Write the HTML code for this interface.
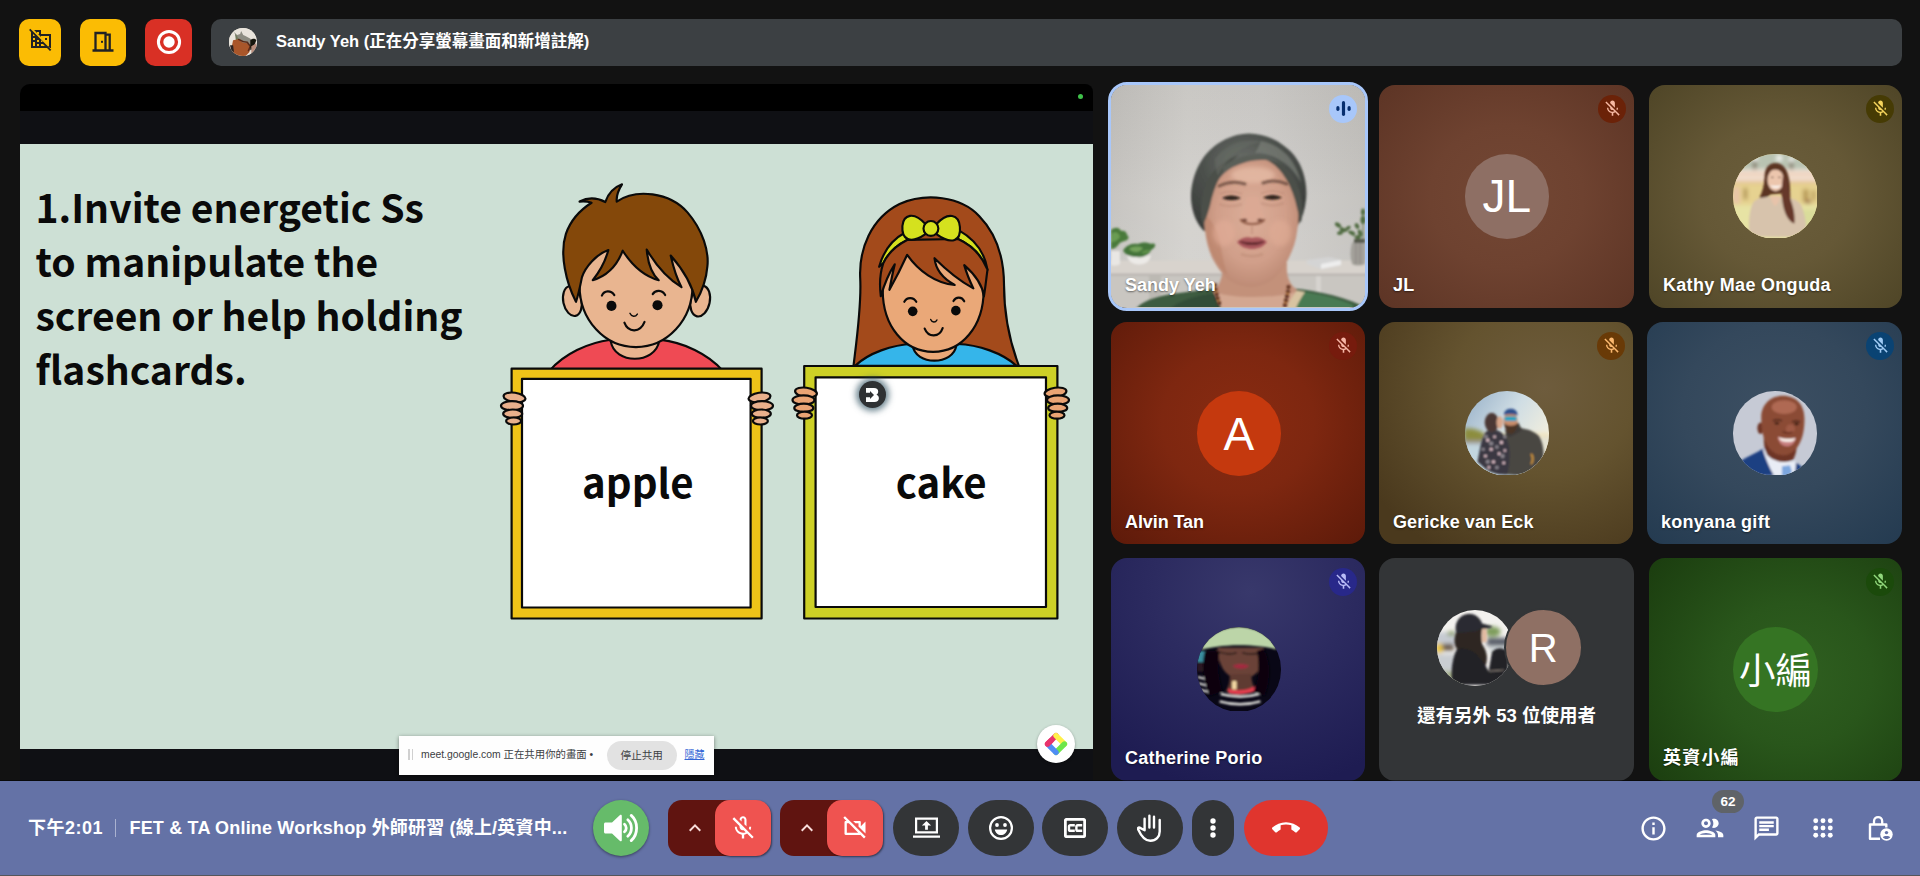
<!DOCTYPE html>
<html lang="zh-Hant">
<head>
<meta charset="utf-8">
<title>Meet</title>
<style>
*{box-sizing:border-box;margin:0;padding:0}
html,body{width:1920px;height:876px;overflow:hidden;background:#121212}
body{position:relative;font-family:"Liberation Sans","Noto Sans CJK TC",sans-serif;color:#fff}
.abs{position:absolute}
/* top bar */
.tb{position:absolute;top:19px;height:47px;border-radius:10px}
.pill{position:absolute;left:211px;top:19px;width:1691px;height:47px;border-radius:10px;background:#3c4043}
.pill .nm{position:absolute;left:65px;top:0;line-height:45px;font-size:16.5px;font-weight:700;letter-spacing:0;color:#fff;white-space:nowrap}
/* presentation */
.pres{position:absolute;left:20px;top:84px;width:1073px;height:697px;background:#0f1014;border-top-left-radius:10px;border-top-right-radius:8px;overflow:hidden}
.pres .blk{position:absolute;left:0;top:0;width:100%;height:27px;background:#000}
.slide{position:absolute;left:0;top:59.6px;width:1073px;height:605.4px;background:#cde0d5}
.stxt{position:absolute;left:15.5px;top:35px;font-family:"Noto Sans CJK TC","Liberation Sans",sans-serif;font-weight:700;font-size:39.05px;line-height:54.2px;color:#0a0a0a;white-space:nowrap}
.cardtxt{position:absolute;font-family:"Noto Sans CJK TC","Liberation Sans",sans-serif;font-weight:700;font-size:40px;color:#0a0a0a;text-align:center;white-space:nowrap}
/* tiles */
.tile{position:absolute;width:254px;height:222px;border-radius:16px;overflow:hidden}
.tile .name{position:absolute;left:14px;top:189.7px;line-height:20px;font-size:18px;font-weight:700;letter-spacing:-.3px;color:#fff;white-space:nowrap;text-shadow:0 1px 2px rgba(0,0,0,.5)}
.tile .av{position:absolute;left:85.5px;top:69px;width:84.5px;height:84.5px;border-radius:50%;overflow:hidden;text-align:center;line-height:84.5px;font-size:46px;color:#fff}
.tile .mic{position:absolute;right:8px;top:9.8px;width:28px;height:28px;border-radius:50%}
.tile .mic svg{position:absolute;left:4.5px;top:4.5px;width:19px;height:19px}
/* bottom bar */
.bar{position:absolute;left:0;top:780.5px;width:1920px;height:95.5px;background:#6472a6;box-shadow:0 -1px 0 rgba(0,0,0,.5)}
.bar .btn{position:absolute;top:19px;height:56px;border-radius:28px;background:#333537}
.bar .t{position:absolute;top:0;line-height:95px;font-size:18px;font-weight:700;color:#fff;white-space:nowrap;letter-spacing:.18px}
</style>
</head>
<body>

<!-- TOP BAR -->
<div class="tb" style="left:19px;width:42px;background:#fbbc04">
  <svg class="abs" style="left:9.500px;top:8px" width="24" height="24" viewBox="0 0 24 24"><path fill="#202124" d="M8 5h2v2h-.9L12 9.900V9h8v10h-1.100l2.100 2H22V7H12V3H5.100L8 5.900V5zm8 6h2v2h-2v-2zM1.300 1.800L.1 3.100 2 5v16h16l3 3 1.300-1.300-21-20.900zM4 7h.1L6 8.900V9H4V7zm0 4h2v2H4v-2zm0 4h2v2H4v-2zm0 4v-2h2v2H4zm4 0v-2h2v2H8zm0-4v-2h2v2H8zm0-4h.1l1.900 1.900V11zm4 8v-2h2v.1l1.900 1.900H12zm0-4v-1.900L13.900 15H12z"/></svg>
</div>
<div class="tb" style="left:80px;width:46px;background:#fbbc04">
  <svg class="abs" style="left:11px;top:11px" width="24" height="24" viewBox="0 0 24 24"><path fill="none" stroke="#202124" stroke-width="2.300" d="M1.500 20.500h21M4.500 20.500V3h10v17.500M14.500 4.700h4.200v15.800"/><rect x="10" y="10.800" width="2" height="2" fill="#202124"/></svg>
</div>
<div class="tb" style="left:145px;width:47px;background:#d93025">
  <svg class="abs" style="left:10.500px;top:9.500px" width="26" height="26" viewBox="0 0 26 26"><circle cx="13" cy="13" r="10.600" fill="none" stroke="#fff" stroke-width="3"/><circle cx="13" cy="13" r="5.700" fill="#fff"/></svg>
</div>
<div class="pill">
  <div class="abs" id="sandyav" style="left:17.800px;top:8.800px;width:28.400px;height:28.400px;border-radius:50%;background:#e9e3da;overflow:hidden"><svg class="abs" style="left:0;top:0" width="28.400" height="28.400" viewBox="0 0 28 28"><defs><filter id="pb"><feGaussianBlur stdDeviation=".7"/></filter></defs><g filter="url(#pb)"><rect width="28" height="28" fill="#e9e4dc"/><path d="M5 4l3 3 3-1 1-3 2 4c3 1 6 3 9 5l3 1v6l-8 2-9-8z" fill="#8d8c82"/><path d="M6 6l2 2 2 5-3 1z" fill="#6f7a5c"/><path d="M4 12l5-1 4 3 5 1 3 4-1 5-4 4H6L2 22z" fill="#a9562b"/><path d="M9 11c3 2 6 3 9 3l3 4-2 5" stroke="#5a2a18" stroke-width="1.600" fill="none"/><path d="M21 12c2-2 5-2 6 0l-4 9-2 1z" fill="#15130f"/><path d="M22 18l5-3v8l-5 4z" fill="#b98d7c"/><path d="M1 17l3 0 1 7-3-2z" fill="#2a2420"/></g></svg></div>
  <div class="nm">Sandy Yeh (正在分享螢幕畫面和新增註解)</div>
</div>

<!-- PRESENTATION -->
<div class="pres">
  <div class="blk"></div>
  <div class="abs" style="left:1058px;top:10px;width:5px;height:5px;border-radius:50%;background:#3fc14a"></div>
  <div class="slide" id="slide">
    <svg class="abs" style="left:0;top:0" width="1072" height="605.4" viewBox="20 143.6 1072 605.4">
<g stroke="#0a0a0a" stroke-linejoin="round" stroke-linecap="round">
<!-- BOY -->
<g transform="translate(540,170) scale(0.2398)" stroke-width="9">
  <path d="M40 835C100 765 200 718 295 706L500 706C600 718 700 765 762 835Z" fill="#ef4a54"/>
  <path d="M295 712C310 810 480 810 497 712Z" fill="#e9b590"/>
  <ellipse cx="135" cy="545" rx="38" ry="63" transform="rotate(-12 135 545)" fill="#e9b590"/>
  <ellipse cx="668" cy="545" rx="40" ry="65" transform="rotate(12 668 545)" fill="#e9b590"/>
  <path d="M165 480C165 625 270 737 400 737C530 737 636 625 636 480C636 380 560 290 400 290C240 290 165 380 165 480Z" fill="#e9b590"/>
  <path d="M150 548C110 470 80 350 108 265C125 215 160 170 215 135C195 128 180 128 165 130C200 112 240 115 272 132C285 95 310 70 342 58C325 85 318 110 320 130C400 75 540 90 615 175C680 250 705 340 698 400C694 450 672 510 650 548C640 500 620 440 545 355C555 400 570 450 590 487C530 450 480 390 445 330C450 390 465 430 495 458C430 440 380 390 345 335C320 400 280 440 220 458C250 420 275 370 285 332C235 350 190 400 175 445C168 480 160 520 150 548Z" fill="#84480a"/>
  <circle cx="298" cy="565" r="21" fill="#0a0a0a" stroke="none"/>
  <circle cx="490" cy="562" r="21" fill="#0a0a0a" stroke="none"/>
  <path d="M258 522C268 500 295 498 310 520" fill="none"/>
  <path d="M470 516C482 497 510 498 522 520" fill="none"/>
  <path d="M375 596C382 612 398 612 406 599" fill="none" stroke-width="6"/>
  <path d="M352 635C368 678 418 678 436 632" fill="none"/>
</g>
<!-- GIRL -->
<g transform="translate(830,170) scale(0.23973)" stroke-width="9">
  <path d="M98 815C112 700 132 560 126 450C120 330 170 200 290 140C400 92 545 108 622 190C700 270 726 380 726 480C726 600 752 720 788 815Z" fill="#a34a1b"/>
  <path d="M105 815C160 762 260 727 345 724L530 724C620 727 720 762 778 815Z" fill="#35b5ea"/>
  <path d="M345 730C355 815 515 815 527 730Z" fill="#eaa878"/>
  <path d="M220 500C220 650 310 757 430 757C550 757 641 650 641 500C641 400 560 320 430 320C300 320 220 400 220 500Z" fill="#eaa878"/>
  <path d="M205 402C225 330 265 285 312 260L322 290C282 310 242 345 222 388Z" fill="#d5e11e"/>
  <path d="M538 250C600 285 645 340 657 414C635 360 592 312 534 286Z" fill="#d5e11e"/>
  <path d="M212 525C205 470 208 430 222 388C242 345 282 310 322 290L534 286C592 312 635 360 657 414C652 450 648 490 642 525C635 470 600 430 560 395C570 430 585 465 598 492C540 460 480 410 436 366C440 410 470 450 520 478C440 470 370 420 322 352C300 400 275 450 248 498C255 460 262 425 270 392C245 430 225 480 212 525Z" fill="#a34a1b"/>
  <path d="M398 224C350 170 306 184 302 232C298 288 335 310 398 266Z" fill="#d5e11e"/>
  <path d="M444 224C492 170 538 184 542 236C547 292 510 314 444 266Z" fill="#d5e11e"/>
  <circle cx="421" cy="242" r="31" fill="#d5e11e"/>
  <circle cx="345" cy="588" r="20" fill="#0a0a0a" stroke="none"/>
  <circle cx="525" cy="585" r="20" fill="#0a0a0a" stroke="none"/>
  <path d="M310 548C320 528 348 527 360 548" fill="none"/>
  <path d="M515 545C525 526 550 526 560 546" fill="none"/>
  <path d="M420 622C426 636 440 636 446 624" fill="none" stroke-width="6"/>
  <path d="M395 660C410 698 456 698 470 658" fill="none"/>
</g>
<!-- CARDS -->
<g stroke-width="2.2">
  <rect x="511.600" y="368.300" width="250" height="249.800" fill="#efc318"/>
  <rect x="522" y="378.500" width="228.600" height="228.600" fill="#fff"/>
  <rect x="804.200" y="365.600" width="253.200" height="252.500" fill="#cdd026"/>
  <rect x="815.600" y="376.900" width="230.400" height="229.700" fill="#fff"/>
</g>
<!-- HANDS -->
<g stroke-width="2.2" fill="#e9b08c">
  <ellipse cx="514.500" cy="397" rx="11" ry="4.700" transform="rotate(8 514.500 397)"/>
  <ellipse cx="512" cy="405.300" rx="11" ry="4.600"/>
  <ellipse cx="512.700" cy="413.300" rx="9.500" ry="4.200"/>
  <ellipse cx="513.600" cy="420.600" rx="7.500" ry="3.500"/>
  <ellipse cx="759.500" cy="397" rx="11" ry="4.700" transform="rotate(-8 759.500 397)"/>
  <ellipse cx="762" cy="405.300" rx="11" ry="4.600"/>
  <ellipse cx="761.300" cy="413.300" rx="9.500" ry="4.200"/>
  <ellipse cx="760.400" cy="420.600" rx="7.500" ry="3.500"/>
</g>
<g stroke-width="2.2" fill="#eaa474">
  <ellipse cx="806" cy="392" rx="11" ry="4.700" transform="rotate(8 806 392)"/>
  <ellipse cx="803.500" cy="399.500" rx="11" ry="4.600"/>
  <ellipse cx="803.800" cy="407.500" rx="9.500" ry="4.200"/>
  <ellipse cx="804.500" cy="414.800" rx="7.500" ry="3.500"/>
  <ellipse cx="1055.500" cy="392" rx="11" ry="4.700" transform="rotate(-8 1055.500 392)"/>
  <ellipse cx="1058" cy="399.500" rx="11" ry="4.600"/>
  <ellipse cx="1057.700" cy="407.500" rx="9.500" ry="4.200"/>
  <ellipse cx="1057" cy="414.800" rx="7.500" ry="3.500"/>
</g>
</g>
<text x="637.800" y="497.200" text-anchor="middle" font-family="'Noto Sans CJK TC','Liberation Sans',sans-serif" font-weight="700" font-size="40.200" fill="#0a0a0a">apple</text>
<text x="941.200" y="497.200" text-anchor="middle" font-family="'Noto Sans CJK TC','Liberation Sans',sans-serif" font-weight="700" font-size="40.200" fill="#0a0a0a">cake</text>
</svg>
<div class="stxt">1.Invite energetic Ss<br>to manipulate the<br>screen or help holding<br>flashcards.</div>
  </div>

  <!-- B icon -->
  <div class="abs" style="left:838.500px;top:297px;width:27px;height:27px;border-radius:50%;background:#2f3133;box-shadow:0 0 6px 3px rgba(45,80,95,.7)">
    <svg class="abs" style="left:7.500px;top:6.500px" width="13" height="14" viewBox="0 0 13 14"><path fill="#fff" d="M0 0h8c2.800 0 4.200 1.500 4.200 3.500 0 1.500-.7 2.600-1.800 3.200 1.500.5 2.500 1.700 2.500 3.500 0 2.300-1.700 3.800-4.500 3.800H0V9.200h4V11l4-4-4-4v1.800H0z"/></svg>
  </div>
  <!-- annotate -->
  <div class="abs" style="left:1017px;top:641px;width:38px;height:38px;border-radius:50%;background:#fff;box-shadow:0 1px 3px rgba(0,0,0,.35)">
    <svg class="abs" style="left:7px;top:7px" width="24" height="24" viewBox="0 0 24 24"><g fill="none" stroke-width="5.400" stroke-linecap="round"><path d="M3.600 12L12 3.600" stroke="#e8336d"/><path d="M12 3.600L20.400 12" stroke="#fff04a"/><path d="M20.400 12L12 20.400" stroke="#6ee64a"/><path d="M12 20.400L5.600 14" stroke="#4f8df5"/><path d="M3.600 12L7 8.600" stroke="#e8336d"/></g></svg>
  </div>
  <!-- share notice -->
  <div class="abs" style="left:379px;top:652px;width:315px;height:38.500px;background:#fefefe;box-shadow:0 1px 4px rgba(0,0,0,.45);font-size:10.400px;color:#3c4043;white-space:nowrap">
    <div class="abs" style="left:9px;top:13px;width:1.500px;height:11px;background:#d0d0d0"></div><div class="abs" style="left:12.500px;top:13px;width:1.500px;height:11px;background:#d0d0d0"></div>
    <div class="abs" style="left:22px;top:0;line-height:38px">meet.google.com 正在共用你的畫面 •</div>
    <div class="abs" style="left:208px;top:4.500px;width:69.500px;height:29.500px;border-radius:15px;background:#e2e2e2;text-align:center;line-height:29px;font-size:10.600px;color:#3c4043">停止共用</div>
    <div class="abs" style="left:285.500px;top:0;line-height:38px;font-size:10px;color:#3367d6;text-decoration:underline">隱藏</div>
  </div>
</div>

<!-- TILES -->
<div id="tiles">
<div class="abs" style="left:1108px;top:82px;width:260px;height:229px;border-radius:19px;border:3px solid #a8c7fa"></div>
<div class="tile" style="left:1111px;top:85px;height:223px;background:#c9c7c4"><div id="sandyvid" class="abs" style="left:0;top:0;width:254px;height:222px"><svg viewBox="0 0 254 222" width="254" height="222" style="position:absolute;left:0;top:0">
<defs>
<linearGradient id="sw" x1="0" x2="1" y1="0" y2="0"><stop offset="0" stop-color="#c4c2be"/><stop offset=".3" stop-color="#d2d0cc"/><stop offset=".6" stop-color="#d0cecb"/><stop offset="1" stop-color="#c3c1bd"/></linearGradient>
<linearGradient id="swv" x1="0" x2="0" y1="0" y2="1"><stop offset="0" stop-color="#000" stop-opacity=".04"/><stop offset=".5" stop-color="#fff" stop-opacity=".05"/><stop offset="1" stop-color="#fff" stop-opacity=".1"/></linearGradient>
<radialGradient id="sf" cx=".5" cy=".45" r=".6"><stop offset="0" stop-color="#dcae99"/><stop offset=".6" stop-color="#d19f8a"/><stop offset="1" stop-color="#b98670"/></radialGradient>
<radialGradient id="sh" cx=".45" cy=".3" r=".7"><stop offset="0" stop-color="#6b6f6a"/><stop offset=".5" stop-color="#4c504c"/><stop offset="1" stop-color="#3a3d3a"/></radialGradient>
<filter id="sb1" x="-10%" y="-10%" width="120%" height="120%"><feGaussianBlur stdDeviation="1.1"/></filter>
<filter id="sb2" x="-20%" y="-20%" width="140%" height="140%"><feGaussianBlur stdDeviation="2.2"/></filter>
<filter id="sb3" x="-20%" y="-20%" width="140%" height="140%"><feGaussianBlur stdDeviation="0.9"/></filter>
</defs>
<rect width="254" height="222" fill="url(#sw)"/>
<rect width="254" height="222" fill="url(#swv)"/>
<g filter="url(#sb3)">
<!-- shelf -->
<rect x="-2" y="189" width="260" height="36" fill="#c9c6c1"/>
<rect x="-2" y="175.500" width="260" height="14" fill="#d8d3cd"/>
<rect x="-2" y="188.500" width="260" height="2.500" fill="#bcb8b3"/>
<rect x="205" y="191" width="5" height="31" fill="#d6d3cf"/>
<rect x="38" y="191" width="12" height="31" fill="#bcb9b3"/>
<!-- book -->
<path d="M196 175l22-3 12 3v5l-20 4-14-5z" fill="#d4d4d4"/><path d="M210 179l20-4v5l-20 4z" fill="#ededed"/>
<!-- left plants -->
<path d="M0 166h9v13c-3 2-6 2-9 1z" fill="#e9e7e4"/>
<path d="M16 170c8 2 16 2 24 0-1 6-5 9.500-12 9.500S17 176 16 170z" fill="#eceae7"/>
<path d="M0 145c4-3 8-3 10 1 3-1 6 1 6 4 2 1 2 4 0 5-3 2-6 1-8 4-2 3-5 5-8 5z" fill="#4a7a3a"/>
<path d="M1 148c4-2 7 0 8 4-2 3-5 5-9 5z" fill="#6b9c53"/>
<path d="M13 164c3-4 8-6 14-5 4-2 9-2 13 0 3-1 5 0 4 2-1 3-4 3-5 6-3 4-8 6-13 5-6 0-11-2-13-5-1-1-1-2 0-3z" fill="#44753a"/>
<path d="M18 164c4-3 9-3 14-1-2 4-9 6-14 1z" fill="#74a35b"/>
<path d="M30 168c2-3 6-4 9-3-1 3-5 5-9 3z" fill="#5d9049"/>
<!-- right plant -->
<path d="M241 158c2-3 11-3 13 0v21c-4 2-10 2-13 0-2-7-2-14 0-21z" fill="#a3a09a"/>
<path d="M245 157v22M249 157v22" stroke="#8b8882" stroke-width="1.200"/>
<path d="M243 154h11v4h-11z" fill="#55584c"/>
<g fill="#4f6b40"><ellipse cx="227" cy="140" rx="3.500" ry="2" transform="rotate(35 227 140)"/><ellipse cx="232" cy="145" rx="3.500" ry="2" transform="rotate(20 232 145)"/><ellipse cx="237" cy="143" rx="3" ry="1.800" transform="rotate(-30 237 143)"/><ellipse cx="241" cy="148" rx="3.500" ry="2" transform="rotate(25 241 148)"/><ellipse cx="229" cy="148" rx="3" ry="1.800" transform="rotate(-10 229 148)"/><ellipse cx="246" cy="141" rx="3" ry="2" transform="rotate(60 246 141)"/><ellipse cx="249" cy="148" rx="3.500" ry="2" transform="rotate(70 249 148)"/><ellipse cx="252" cy="135" rx="2.500" ry="4" /><ellipse cx="252" cy="127" rx="2" ry="3.500"/><ellipse cx="247" cy="152" rx="3" ry="2"/></g>
<path d="M228 141c6 3 12 7 18 13M252 128v26" stroke="#4f6b40" stroke-width="1" fill="none"/>
</g>
<!-- person -->
<g filter="url(#sb1)">
<path d="M24 226c4-9 20-15 44-18l38-5h68c22 1 52 6 78 18v6z" fill="#3d5b41"/><path d="M186 206c18 2 38 6 56 14v6h-62z" fill="#4a7a52"/><path d="M176 204l18 3c-4 6-8 12-10 19h-14z" fill="#d8c4a2"/>
<path d="M56 226c10-10 30-16 48-18h14l-4 18z" fill="#334e39"/>
<path d="M112 178c0 14-3 22-10 28 5 7 8 13 10 20h62c2-7 6-14 12-21-8-6-11-14-10-27z" fill="#c3917a"/>
<path d="M102 206c4 7 7 13 9 20h64c2-7 5-13 10-19-10 3-24 5-42 5s-33-2-41-6z" fill="#d3a791"/>
<!-- hair back -->
<path d="M93 146c-6-6-10-14-12-24-2-10-1-20 2-30 3-10 8-19 15-26 8-8 17-13 28-16 8-2 16-2 24 0 10 2 19 7 27 14 7 6 12 14 15 23 3 9 4 19 3 28-1 10-4 19-9 27-10 6-83 8-93 4z" fill="url(#sh)"/>
<!-- face -->
<path d="M94 127c1-10 4-20 10-28 5-7 11-13 17.500-18 8-5 17-8 26-8.500 8 0 14 2 20 6.500 6 5 10 11 13 17.500 3 8 5 17 6.500 26 1 8 .5 16-1 24-1 9-4 18-8 26-3 7-8 14-14 20-7 6-15 9-24 9.500-9-.5-17-3-24-8.500-6-6-11-13-15-21-4-9-6-18-7-27-1-6-1-12 0-18.500z" fill="url(#sf)"/>
<path d="M94 130c0 14 2 28 8 40 4 8 9 15 15 21-4-10-6-22-8-34-2-10-6-20-15-27z" fill="#b98268" opacity=".55"/>
<!-- hair front -->
<path d="M92 140c-3-11-3-24 1-36 3-9 8-17 15-23 6-5 13-9 20-11-8 6-14 13-19 22-5 9-8 19-10 29-2 7-4 13-7 19z" fill="#4b4f4a"/>
<path d="M190 138c2-10 2-21-1-31-3-10-8-19-16-25-6-5-14-8-22-9 8 3 15 8 20 15 6 8 10 17 13 27 2 8 4 16 6 23z" fill="#4b4f4a"/>
<path d="M112 82c8-7 18-11 29-12 10-1 20 2 28 8-9-3-19-4-29-2-10 2-20 6-28 13z" fill="#5a5e58"/>
<path d="M150 56c10 2 19 7 26 14 7 8 12 18 14 28-4-8-10-16-18-21-8-6-18-9-28-9 3-4 4-8 6-12z" fill="#7b7f78" opacity=".7"/>
<path d="M104 74c6-8 14-14 24-17 8-2 16-2 24 0-10 1-19 5-27 11-8 6-14 14-18 23-2-6-3-11-3-17z" fill="#666a64" opacity=".6"/>
</g>
<g filter="url(#sb2)">
<ellipse cx="113" cy="148" rx="11" ry="13" fill="#e2ad98" opacity=".6"/>
<ellipse cx="169" cy="148" rx="11" ry="13" fill="#e2ad98" opacity=".55"/>
<ellipse cx="142" cy="90" rx="22" ry="8" fill="#e7bda8" opacity=".7"/>
</g>
<g filter="url(#sb3)">
<!-- brows -->
<path d="M108 101c8-4 17-5 26-2" stroke="#5d4035" stroke-width="3" fill="none" stroke-linecap="round" opacity=".7"/>
<path d="M152 98c8-3 17-2 24 1" stroke="#5d4035" stroke-width="3" fill="none" stroke-linecap="round" opacity=".7"/>
<!-- eyes -->
<path d="M111 113c5-3.500 13-3.500 19 0-6 3-13 3-19 0z" fill="#2f211b"/>
<path d="M152 112.500c6-3.500 13-3.500 19 0-6 3-13 3-19 0z" fill="#2f211b"/>
<path d="M109 109c6-3 15-3 22 0M150 108.500c7-3 16-3 23 0" stroke="#a87661" stroke-width="1.500" fill="none" opacity=".35"/>
<path d="M108 119c6 3 16 3 23 0M150 118c7 3 16 3 23 0" stroke="#b07f6b" stroke-width="2.500" fill="none" opacity=".3"/>
<!-- nose -->
<path d="M136 112c-1 8-3 14-6 19 2 4 6 6 11 6s10-2 12-6c-3-5-5-11-6-19" fill="#dba993" opacity=".9"/>
<path d="M130 135c3 3 7 4 11 4s9-1 12-4" stroke="#9c6853" stroke-width="2.500" fill="none" stroke-linecap="round"/>
<ellipse cx="133.500" cy="135" rx="2.800" ry="1.600" fill="#74463a"/><ellipse cx="149" cy="135" rx="2.800" ry="1.600" fill="#74463a"/>
<path d="M141 141v8" stroke="#c08f7a" stroke-width="2" opacity=".6"/>
<!-- mouth -->
<path d="M126 157c4-4 10-6 15-4 5-2 11 0 15 4-4 5-9 7-15 7s-11-2-15-7z" fill="#a9575c"/>
<path d="M129 156.500c8 2 16 2 24 0-6 4-18 4-24 0z" fill="#4a1c22" stroke="#5e262c" stroke-width="1.200"/>
<path d="M130 169c7 3 15 3 22 0" stroke="#b98772" stroke-width="2.500" fill="none" opacity=".5"/>
<!-- necklace -->
<g fill="#5e3220">
<circle cx="104" cy="200" r="2.100"/><circle cx="104.500" cy="204.500" r="2.100"/><circle cx="105.500" cy="209" r="2.200"/><circle cx="106.500" cy="213.500" r="2.200"/><circle cx="108" cy="218" r="2.200"/>
<circle cx="177.500" cy="202" r="2.100"/><circle cx="177" cy="206.500" r="2.100"/><circle cx="176" cy="211" r="2.200"/><circle cx="175" cy="215.500" r="2.200"/><circle cx="174" cy="220" r="2.200"/>
</g>
<g fill="#b5763c"><circle cx="105" cy="206.800" r="1.200"/><circle cx="107.200" cy="215.800" r="1.200"/><circle cx="176.500" cy="208.800" r="1.200"/><circle cx="174.500" cy="217.800" r="1.200"/></g>
</g>
</svg>
</div><div class="name" style="letter-spacing:0.0px">Sandy Yeh</div><div class="mic" style="background:#a8c7fa"><svg viewBox="0 0 18 18"><g fill="#062e6f"><rect x="7.500" y="2" width="3" height="14" rx="1.500"/><rect x="2.200" y="6.700" width="3" height="4.600" rx="1.500"/><rect x="12.800" y="6.700" width="3" height="4.600" rx="1.500"/></g></svg></div></div>
<div class="tile" style="left:1379px;top:85px;width:255px;height:223px;background:radial-gradient(ellipse 75% 80% at 50% 50%,#734734 0%,#6e4230 40%,#5a3223 100%)"><div class="av" style="background:#8e6f64">JL</div><div class="mic" style="background:#6b2208"><svg viewBox="0 0 24 24"><path fill="#f6b8a2" d="M19 11h-1.7c0 .74-.16 1.43-.43 2.05l1.23 1.23c.56-.98.9-2.09.9-3.28zm-4.02.17c0-.06.02-.11.02-.17V5c0-1.66-1.34-3-3-3S9 3.340 9 5v.18l5.980 5.990zM4.270 3L3 4.270l6.010 6.010V11c0 1.660 1.330 3 2.990 3 .22 0 .44-.03.65-.08l1.660 1.660c-.71.33-1.500.52-2.310.52-2.760 0-5.300-2.100-5.300-5.100H5c0 3.410 2.720 6.230 6 6.720V21h2v-3.280c.91-.13 1.770-.45 2.540-.9L19.730 21 21 19.730 4.270 3z"/></svg></div><div class="name" style="letter-spacing:0.3px">JL</div></div>
<div class="tile" style="left:1649px;top:85px;width:253px;height:223px;background:radial-gradient(ellipse 75% 80% at 50% 50%,#6b5e3c 0%,#655836 40%,#4b4224 100%)"><div class="av" id="av_kathy" style="left:84.3px;background:transparent"><svg class="abs" style="left:0;top:0" width="84" height="84" viewBox="70 68 745 745"><defs><filter id="ab" x="-10%" y="-10%" width="120%" height="120%"><feGaussianBlur stdDeviation="9"/></filter><filter id="ab2" x="-10%" y="-10%" width="120%" height="120%"><feGaussianBlur stdDeviation="18"/></filter></defs>
<rect x="60" y="60" width="770" height="770" fill="#e6d79a"/>
<g filter="url(#ab2)">
<rect x="60" y="40" width="770" height="170" fill="#b9c3b2"/>
<rect x="250" y="110" width="26" height="100" fill="#6e5a45"/><rect x="575" y="120" width="26" height="90" fill="#6e5a45"/>
<circle cx="265" cy="110" r="22" fill="#fff"/><circle cx="480" cy="105" r="24" fill="#fff"/><circle cx="588" cy="118" r="20" fill="#fff"/>
<rect x="60" y="205" width="770" height="120" fill="#f4e9e0"/>
<rect x="60" y="232" width="770" height="18" fill="#e9bf9c"/><rect x="60" y="268" width="770" height="14" fill="#edc9aa"/><rect x="60" y="305" width="770" height="22" fill="#e3b98e"/>
<rect x="60" y="330" width="770" height="190" fill="#e6d290"/>
<rect x="165" y="370" width="30" height="100" fill="#a8894a"/><rect x="690" y="380" width="50" height="110" fill="#b79a57"/><rect x="770" y="390" width="30" height="90" fill="#b79a57"/><rect x="710" y="480" width="50" height="22" fill="#7a3a2a"/>
<rect x="70" y="360" width="60" height="150" fill="#e9c5a8"/>
<rect x="60" y="520" width="770" height="320" fill="#e7e3a4"/>
<rect x="600" y="560" width="240" height="200" fill="#d9dc9a"/>
</g>
<g filter="url(#ab)">
<path d="M445 148c-60 0-95 50-95 120 0 60-10 120-45 190l40 10 60-40 95-10c5 60 15 110 20 170 30 60 60 90 85 100 15-50-5-120-20-180-15-70 0-140-20-230-15-80-55-130-120-130z" fill="#5b3424"/>
<path d="M215 800c-10-120 0-250 40-310 40-35 90-40 130-40l130 5c60 0 110 10 150 50 40 70 60 190 55 300z" fill="#d7c3ac"/>
<path d="M400 440c10 50 30 80 45 90 20-15 40-50 45-90z" fill="#e7c3aa"/>
<ellipse cx="448" cy="300" rx="72" ry="98" fill="#ecc6ad"/>
<path d="M395 345c30 30 80 30 105 0-20 8-85 8-105 0z" fill="#fff"/>
<path d="M372 250c20-50 60-75 100-70 30 5 55 30 60 80-30-40-60-55-90-55-30 0-55 20-70 45z" fill="#5b3424"/>
<path d="M515 235c30 40 45 100 50 160 5 60 30 110 42 165 10 50 12 95 8 125-30-10-60-40-80-90-20-50-30-110-32-170-2-60 5-110 12-190z" fill="#66382a"/><ellipse cx="418" cy="275" rx="11" ry="6" fill="#3a2018"/><ellipse cx="482" cy="275" rx="11" ry="6" fill="#3a2018"/><path d="M305 455c30-50 40-110 45-170l30 60-10 90z" fill="#5b3424"/>
</g>
</svg></div><div class="mic" style="background:#463b04"><svg viewBox="0 0 24 24"><path fill="#f5d45c" d="M19 11h-1.7c0 .74-.16 1.43-.43 2.05l1.23 1.23c.56-.98.9-2.09.9-3.28zm-4.02.17c0-.06.02-.11.02-.17V5c0-1.66-1.34-3-3-3S9 3.340 9 5v.18l5.980 5.990zM4.270 3L3 4.270l6.010 6.010V11c0 1.660 1.330 3 2.990 3 .22 0 .44-.03.65-.08l1.660 1.660c-.71.33-1.500.52-2.310.52-2.760 0-5.300-2.100-5.300-5.100H5c0 3.410 2.720 6.230 6 6.720V21h2v-3.280c.91-.13 1.770-.45 2.540-.9L19.730 21 21 19.730 4.270 3z"/></svg></div><div class="name" style="letter-spacing:0.3px">Kathy Mae Onguda</div></div>
<div class="tile" style="left:1111px;top:322px;background:radial-gradient(ellipse 75% 80% at 50% 45%,#882b11 0%,#7e2710 40%,#5a1909 100%)"><div class="av" style="background:#c5390e;line-height:86.5px">A</div><div class="mic" style="background:#761b0d"><svg viewBox="0 0 24 24"><path fill="#f6b5a6" d="M19 11h-1.7c0 .74-.16 1.43-.43 2.05l1.23 1.23c.56-.98.9-2.09.9-3.28zm-4.02.17c0-.06.02-.11.02-.17V5c0-1.66-1.34-3-3-3S9 3.340 9 5v.18l5.980 5.990zM4.270 3L3 4.270l6.010 6.010V11c0 1.660 1.330 3 2.990 3 .22 0 .44-.03.65-.08l1.660 1.660c-.71.33-1.500.52-2.310.52-2.760 0-5.300-2.100-5.300-5.100H5c0 3.410 2.720 6.230 6 6.720V21h2v-3.280c.91-.13 1.770-.45 2.540-.9L19.730 21 21 19.730 4.270 3z"/></svg></div><div class="name" style="letter-spacing:-0.08px">Alvin Tan</div></div>
<div class="tile" style="left:1379px;top:322px;background:radial-gradient(ellipse 80% 85% at 65% 30%,#6e5c3d 0%,#64532f 45%,#4a391d 100%)"><div class="av" id="av_ger" style="background:transparent"><svg class="abs" style="left:0;top:0" width="84" height="84" viewBox="70 68 738 738"><defs><filter id="ab" x="-10%" y="-10%" width="120%" height="120%"><feGaussianBlur stdDeviation="9"/></filter><filter id="ab2" x="-10%" y="-10%" width="120%" height="120%"><feGaussianBlur stdDeviation="18"/></filter></defs>
<defs><linearGradient id="gsky" x1="0" y1="0" x2="1" y2=".7"><stop offset="0" stop-color="#93adc6"/><stop offset=".5" stop-color="#cfdde4"/><stop offset="1" stop-color="#fbf3dc"/></linearGradient></defs>
<rect x="60" y="60" width="760" height="760" fill="url(#gsky)"/>
<g filter="url(#ab2)">
<rect x="60" y="440" width="760" height="50" fill="#f0e2b8"/>
<rect x="60" y="490" width="760" height="340" fill="#c2d6df"/>
<rect x="600" y="470" width="230" height="360" fill="#e4e2d2"/>
<path d="M60 400c60-10 130 0 190 50v50H60z" fill="#8c8d3c"/>
<rect x="60" y="500" width="170" height="30" fill="#9a8f80"/>
</g>
<g filter="url(#ab)">
<path d="M410 800c-10-120-10-260 10-350 30-40 80-55 120-55 60 0 130 20 180 70 40 60 50 160 30 260-30 50-70 80-110 90z" fill="#4a4642"/>
<path d="M540 345c10 30 20 50 40 60-30 20-90 60-130 70l-30-60z" fill="#3d3a37"/>
<ellipse cx="470" cy="330" rx="62" ry="80" fill="#c98e6c"/>
<path d="M412 350c10 60 30 90 60 95 35-5 55-40 62-95-20 30-100 30-122 0z" fill="#4b3428"/>
<path d="M412 280c0-40 30-55 62-55 35 0 58 20 58 60-20-15-100-15-120-5z" fill="#2e4f8c"/>
<rect x="418" y="292" width="105" height="40" rx="14" fill="#27a3c2"/>
<path d="M180 690c20-100 30-200 70-260 30-30 80-30 120-10 50 30 80 80 90 150 5 80 0 170-20 230-60 10-130-10-180-40z" fill="#3a3842"/>
<ellipse cx="305" cy="345" rx="62" ry="85" fill="#4c3834"/>
<ellipse cx="375" cy="345" rx="28" ry="55" fill="#d9a78c"/>
<g fill="#8d8790"><circle cx="255" cy="470" r="16"/><circle cx="300" cy="530" r="18"/><circle cx="350" cy="560" r="16"/><circle cx="400" cy="640" r="18"/><circle cx="270" cy="690" r="18"/><circle cx="350" cy="740" r="16"/><circle cx="230" cy="580" r="14"/><circle cx="420" cy="470" r="14"/></g><g fill="#e8c6cf"><circle cx="270" cy="500" r="14"/><circle cx="330" cy="470" r="12"/><circle cx="390" cy="520" r="14"/><circle cx="300" cy="580" r="14"/><circle cx="370" cy="620" r="13"/><circle cx="250" cy="640" r="13"/><circle cx="320" cy="690" r="14"/><circle cx="410" cy="700" r="12"/><circle cx="280" cy="740" r="12"/><circle cx="420" cy="590" r="11"/></g>
<path d="M650 620c20 20 20 70 0 90" stroke="#d79a3a" stroke-width="16" fill="none"/>
</g>
</svg></div><div class="mic" style="background:#693a07"><svg viewBox="0 0 24 24"><path fill="#fbb86f" d="M19 11h-1.7c0 .74-.16 1.43-.43 2.05l1.23 1.23c.56-.98.9-2.09.9-3.28zm-4.02.17c0-.06.02-.11.02-.17V5c0-1.66-1.34-3-3-3S9 3.340 9 5v.18l5.980 5.990zM4.270 3L3 4.270l6.010 6.010V11c0 1.660 1.330 3 2.990 3 .22 0 .44-.03.65-.08l1.660 1.660c-.71.33-1.500.52-2.310.52-2.760 0-5.300-2.100-5.300-5.100H5c0 3.410 2.720 6.230 6 6.720V21h2v-3.280c.91-.13 1.770-.45 2.540-.9L19.730 21 21 19.730 4.270 3z"/></svg></div><div class="name" style="letter-spacing:0.1px">Gericke van Eck</div></div>
<div class="tile" style="left:1647px;top:322px;width:255px;background:radial-gradient(ellipse 80% 85% at 50% 40%,#3c4f62 0%,#34485c 45%,#22394f 100%)"><div class="av" id="av_kon" style="background:transparent"><svg class="abs" style="left:0;top:0" width="84" height="84" viewBox="70 68 738 738"><defs><filter id="ab" x="-10%" y="-10%" width="120%" height="120%"><feGaussianBlur stdDeviation="9"/></filter><filter id="ab2" x="-10%" y="-10%" width="120%" height="120%"><feGaussianBlur stdDeviation="18"/></filter></defs>
<rect x="60" y="60" width="760" height="760" fill="#c6cad5"/>
<g filter="url(#ab)">
<path d="M140 680c60-40 140-70 200-110l90 240H140z" fill="#1f3f82"/>
<path d="M600 690c30 10 60 30 80 50l-40 80h-60z" fill="#1f3f82"/>
<path d="M330 570c20 80 60 170 100 240h180c10-40 15-80 10-130-80 30-200-20-290-110z" fill="#e9edf6"/>
<path d="M500 730l70-10 20 60-40 40h-50z" fill="#7ba6de"/>
<path d="M340 480c0 60 10 110 30 150 60 60 160 80 230 40 20-40 30-80 30-130z" fill="#6e3626"/>
<ellipse cx="312" cy="395" rx="28" ry="50" fill="#6e3626"/>
<path d="M318 300c0-110 80-190 190-190 120 0 190 80 190 200 0 110-20 200-70 260-40 50-90 70-140 60-60-10-110-60-140-130-20-50-30-120-30-200z" fill="#8b4b36"/>
<ellipse cx="520" cy="210" rx="110" ry="60" fill="#b8705a" opacity=".8"/>
<ellipse cx="575" cy="400" rx="40" ry="40" fill="#a45e48" opacity=".8"/>
<path d="M420 330c25-12 55-12 80 0M590 340c25-12 50-10 70 2" stroke="#3a1c14" stroke-width="13" fill="none" opacity=".8"/>
<path d="M462 470c50 20 110 22 160 8-10 50-40 75-80 75-40 0-70-30-80-83z" fill="#c98080"/>
<path d="M470 474c45 16 100 18 148 6-8 26-28 34-70 34-44 0-66-12-78-40z" fill="#fbf6f0"/>
<path d="M505 425c20 14 64 16 88 2" stroke="#5a261a" stroke-width="12" fill="none" opacity=".8"/><ellipse cx="455" cy="352" rx="22" ry="10" fill="#2a120c"/><ellipse cx="628" cy="358" rx="20" ry="10" fill="#2a120c"/>
</g>
</svg></div><div class="mic" style="background:#0a4373"><svg viewBox="0 0 24 24"><path fill="#a0ccf6" d="M19 11h-1.7c0 .74-.16 1.43-.43 2.05l1.23 1.23c.56-.98.9-2.09.9-3.28zm-4.02.17c0-.06.02-.11.02-.17V5c0-1.66-1.34-3-3-3S9 3.340 9 5v.18l5.980 5.990zM4.270 3L3 4.270l6.010 6.010V11c0 1.660 1.330 3 2.990 3 .22 0 .44-.03.65-.08l1.660 1.660c-.71.33-1.500.52-2.310.52-2.760 0-5.300-2.100-5.300-5.100H5c0 3.410 2.720 6.230 6 6.720V21h2v-3.280c.91-.13 1.770-.45 2.540-.9L19.730 21 21 19.730 4.270 3z"/></svg></div><div class="name" style="letter-spacing:0.26px">konyana gift</div></div>
<div class="tile" style="left:1111px;top:558px;height:223px;background:radial-gradient(ellipse 85% 90% at 55% 15%,#38386b 0%,#2c2b60 45%,#1e1c52 100%)"><div class="av" id="av_cat" style="background:transparent"><svg class="abs" style="left:0;top:0" width="84" height="84" viewBox="70 58 742 742"><defs><filter id="ab" x="-10%" y="-10%" width="120%" height="120%"><feGaussianBlur stdDeviation="9"/></filter><filter id="ab2" x="-10%" y="-10%" width="120%" height="120%"><feGaussianBlur stdDeviation="18"/></filter></defs>
<rect x="60" y="50" width="770" height="770" fill="#090716"/>
<g filter="url(#ab)">
<rect x="70" y="270" width="75" height="100" fill="#3b8ea0"/>
<rect x="70" y="370" width="80" height="80" fill="#2a1620"/>
<path d="M250 240h410c10 90-20 170-60 220-40 40-90 60-140 60-60 0-120-30-160-90-30-50-50-120-50-190z" fill="#6b4338"/>
<path d="M360 480c0 60-10 110-40 150h280c-30-40-50-90-50-160z" fill="#5e3a30"/>
<path d="M380 540c10-10 30-10 40 0v70h-40z" fill="#f4d9a4"/>
<path d="M385 400c40-20 100-20 145 0-20 35-120 35-145 0z" fill="#a32a40"/>
<path d="M270 280c50 20 100 20 150 5M470 285c50 15 110 15 170-5" stroke="#2a1a1a" stroke-width="14" fill="none"/>
<path d="M345 600c70 30 170 20 232-18l8 40c-60 35-170 45-240 20z" fill="#e23c4e"/>
<path d="M280 650c110 30 230 30 340 0M270 715c120 35 240 35 360 0" stroke="#e4e4e0" stroke-width="22" fill="none"/>
<path d="M78 500l75 20M85 555l75 22M100 612l70 20" stroke="#e4e4e0" stroke-width="18" fill="none"/>
<path d="M140 270c-30 100-20 250 40 400l120-40c-40-120-50-240-30-360z" fill="#07050f"/>
<path d="M660 250c60 100 70 260 10 420l-100-40c50-130 50-250 30-360z" fill="#07050f"/>
</g>
<g filter="url(#ab)"><path d="M108 262C150 130 300 58 440 58s290 70 332 200c-60-20-200-38-332-38s-270 20-332 42z" fill="#bcd5a8"/></g>
</svg></div><div class="mic" style="background:#28288a"><svg viewBox="0 0 24 24"><path fill="#b8bbf6" d="M19 11h-1.7c0 .74-.16 1.43-.43 2.05l1.23 1.23c.56-.98.9-2.09.9-3.28zm-4.02.17c0-.06.02-.11.02-.17V5c0-1.66-1.34-3-3-3S9 3.340 9 5v.18l5.980 5.990zM4.270 3L3 4.270l6.010 6.010V11c0 1.660 1.330 3 2.990 3 .22 0 .44-.03.65-.08l1.660 1.660c-.71.33-1.500.52-2.310.52-2.760 0-5.300-2.100-5.300-5.100H5c0 3.410 2.720 6.230 6 6.720V21h2v-3.280c.91-.13 1.770-.45 2.540-.9L19.730 21 21 19.730 4.270 3z"/></svg></div><div class="name" style="letter-spacing:0.23px">Catherine Porio</div></div>
<div class="tile" style="left:1379px;top:558px;width:255px;height:223px;background:#333537"><div class="abs" id="av_more" style="left:57.800px;top:51.700px;width:76px;height:76px;border-radius:50%;background:transparent;overflow:hidden"><svg class="abs" style="left:0;top:0" width="76" height="76" viewBox="103 85 665 665"><defs><filter id="ab" x="-10%" y="-10%" width="120%" height="120%"><feGaussianBlur stdDeviation="9"/></filter><filter id="ab2" x="-10%" y="-10%" width="120%" height="120%"><feGaussianBlur stdDeviation="18"/></filter></defs>
<rect x="90" y="70" width="700" height="700" fill="#f3f1ee"/>
<g filter="url(#ab2)">
<rect x="90" y="280" width="200" height="110" fill="#c6cbd2"/>
<rect x="90" y="380" width="60" height="80" fill="#e8c33c"/>
<rect x="150" y="380" width="100" height="60" fill="#6a5a4a"/>
<rect x="90" y="470" width="230" height="150" fill="#c9cdd2"/>
<path d="M90 620h230v150H90z" fill="#a8b38c"/>
<ellipse cx="590" cy="275" rx="70" ry="45" fill="#7e9c5c"/>
<ellipse cx="230" cy="290" rx="40" ry="20" fill="#8ea26e"/>
<rect x="540" y="330" width="200" height="70" fill="#5a5f6a"/>
<rect x="560" y="400" width="200" height="60" fill="#cfd6d8"/>
</g>
<g filter="url(#ab)">
<rect x="495" y="250" width="45" height="120" rx="20" fill="#e2bba2"/>
<path d="M270 280c-30 80-10 140 30 170l120 60 110 60c20-60 10-130-30-180-10-60-10-110 0-150l-150-20z" fill="#2f2723"/>
<path d="M268 270c-15-80 40-150 115-152 60 0 100 40 115 85l90 25c-10 20-50 25-100 20l-30 20-180 20z" fill="#2a2b31"/>
<path d="M235 740c-10-100-5-220 40-310 60-20 120 0 170 40 40 40 80 90 110 150l30-170c40-40 90-40 130-10 20 80 20 200-40 300z" fill="#202126"/>
<path d="M560 620l130-10" stroke="#8a8078" stroke-width="10"/>
</g>
</svg></div><div class="abs" style="left:125.100px;top:50px;width:79.400px;height:79.400px;border-radius:50%;border:2px solid #333537;background:#8f7064;text-align:center;line-height:77px;font-size:40px;color:#fff;text-indent:-1px">R</div><div class="abs" style="left:0;top:143px;width:255px;text-align:center;font-size:18.5px;font-weight:700;color:#fff;white-space:nowrap">還有另外 53 位使用者</div></div>
<div class="tile" style="left:1649px;top:558px;width:253px;height:223px;background:radial-gradient(ellipse 75% 80% at 58% 52%,#2f5f20 0%,#29561b 40%,#1b3d0f 100%)"><div class="av" style="left:84.3px;background:#357423;font-size:36.5px;line-height:89.5px;font-family:'Liberation Sans','Noto Sans CJK TC',sans-serif">小編</div><div class="mic" style="background:#1b4a0b"><svg viewBox="0 0 24 24"><path fill="#90d77b" d="M19 11h-1.7c0 .74-.16 1.43-.43 2.05l1.23 1.23c.56-.98.9-2.09.9-3.28zm-4.02.17c0-.06.02-.11.02-.17V5c0-1.66-1.34-3-3-3S9 3.340 9 5v.18l5.980 5.990zM4.270 3L3 4.270l6.010 6.010V11c0 1.660 1.330 3 2.990 3 .22 0 .44-.03.65-.08l1.660 1.660c-.71.33-1.500.52-2.310.52-2.760 0-5.300-2.100-5.300-5.100H5c0 3.410 2.720 6.230 6 6.720V21h2v-3.280c.91-.13 1.770-.45 2.540-.9L19.730 21 21 19.730 4.270 3z"/></svg></div><div class="name" style="letter-spacing:1.2px">英資小編</div></div>
</div>

<!-- BOTTOM BAR -->
<div class="bar" id="bar">
  <div class="t" style="left:28px;letter-spacing:.5px">下午2:01</div>
  <div class="abs" style="left:115px;top:38px;width:1px;height:18px;background:#aab2d0"></div>
  <div class="t" style="left:129.500px">FET &amp; TA Online Workshop 外師研習 (線上/英資中...</div>
  <div class="abs" style="left:593px;top:19.5px;width:56px;height:56px;border-radius:50%;background:#66bb6a;box-shadow:0 1px 3px rgba(0,0,0,.45)">
    <svg class="abs" style="left:11px;top:12px" width="34" height="32" viewBox="0 0 34 32"><path fill="#fff" d="M1.500 10.500h6.500l8-7.500c.8-.7 1.800-.2 1.800.8v24.400c0 1-1 1.500-1.800.8l-8-7.500H1.500c-.8 0-1.500-.7-1.500-1.500v-8c0-.8.700-1.500 1.500-1.500z"/><g fill="none" stroke="#fff" stroke-width="2.800" stroke-linecap="round"><path d="M20.500 12.200c2.300 2 2.300 5.600 0 7.600"/><path d="M23.800 7.800c4.800 4.200 4.800 12.200 0 16.400"/><path d="M27.200 3.400c7.200 6.400 7.200 18.800 0 25.200"/></g></svg>
  </div>
  <!-- mic group -->
  <div class="abs" style="left:668px;top:19.500px;width:70px;height:56px;border-radius:14px;background:#601410"></div>
  <svg class="abs" style="left:683px;top:35.500px" width="24" height="24" viewBox="0 0 24 24"><path fill="#f9dedc" d="M12 8l-6 6 1.410 1.410L12 10.830l4.590 4.580L18 14z"/></svg>
  <div class="abs" style="left:715px;top:19.500px;width:56px;height:56px;border-radius:15px;background:#ef5350;box-shadow:1px 1px 2px rgba(0,0,0,.5)">
    <svg class="abs" style="left:14px;top:14px" width="28" height="28" viewBox="0 0 24 24"><path fill="#fff" d="M10.800 4.900c0-.66.540-1.200 1.200-1.200s1.200.54 1.200 1.200l-.01 3.910L15 10.600V5c0-1.660-1.340-3-3-3-1.540 0-2.790 1.160-2.960 2.650l1.760 1.760V4.900zM19 11h-1.700c0 .58-.1 1.130-.27 1.640l1.270 1.270c.44-.88.700-1.870.700-2.910zM4.410 2.860L3 4.270l6 6V11c0 1.660 1.340 3 3 3 .23 0 .44-.03.650-.08l1.660 1.660c-.71.330-1.500.52-2.310.52-2.760 0-5.300-2.100-5.300-5.100H5c0 3.410 2.720 6.230 6 6.720V21h2v-3.280c.91-.13 1.770-.45 2.550-.9l4.200 4.200 1.410-1.410L4.410 2.860z"/></svg>
  </div>
  <!-- cam group -->
  <div class="abs" style="left:780px;top:19.500px;width:70px;height:56px;border-radius:14px;background:#601410"></div>
  <svg class="abs" style="left:795px;top:35.500px" width="24" height="24" viewBox="0 0 24 24"><path fill="#f9dedc" d="M12 8l-6 6 1.410 1.410L12 10.830l4.590 4.580L18 14z"/></svg>
  <div class="abs" style="left:827px;top:19.500px;width:56px;height:56px;border-radius:15px;background:#ef5350;box-shadow:1px 1px 2px rgba(0,0,0,.5)">
    <svg class="abs" style="left:14px;top:14px" width="28" height="28" viewBox="0 0 24 24"><path fill="#fff" d="M9.560 8l-2-2-4.150-4.140L2 3.270 4.730 6H4c-.55 0-1 .45-1 1v10c0 .55.450 1 1 1h12c.21 0 .39-.08.550-.18L19.730 21l1.410-1.410-8.860-8.860L9.560 8zM5 16V8h1.730l8 8H5zm10-8v2.610l6 6V6.500l-4 4V7c0-.55-.45-1-1-1h-5.610l2 2H15z"/></svg>
  </div>
  <!-- present -->
  <div class="btn" style="left:893px;width:66px;top:19.500px">
    <svg class="abs" style="left:20px;top:15px" width="27" height="25" viewBox="0 0 27 25"><path fill="none" stroke="#fff" stroke-width="2.200" d="M3.100 3.600h20.800v13.800H3.100z"/><path fill="#fff" d="M0 20.500h27v2.200H0zM13.500 6l4.600 4.600h-3.200v4.200h-2.800v-4.200H8.900z"/></svg>
  </div>
  <!-- emoji -->
  <div class="btn" style="left:968px;width:66px;top:19.500px">
    <svg class="abs" style="left:20px;top:15px" width="26" height="26" viewBox="0 0 26 26"><circle cx="13" cy="13" r="10.900" fill="none" stroke="#fff" stroke-width="2.200"/><circle cx="9" cy="10" r="1.900" fill="#fff"/><circle cx="17" cy="10" r="1.900" fill="#fff"/><path fill="#fff" d="M6.800 14.500h12.400c-.6 3.400-3.100 5.600-6.200 5.600s-5.600-2.200-6.200-5.600z"/></svg>
  </div>
  <!-- cc -->
  <div class="btn" style="left:1042px;width:66px;top:19.500px">
    <svg class="abs" style="left:22px;top:18px" width="22" height="20" viewBox="0 0 22 20"><rect x="1.300" y="1.300" width="19.400" height="17.400" rx="1.800" fill="none" stroke="#fff" stroke-width="2.900"/><path fill="none" stroke="#fff" stroke-width="2.400" d="M10.800 7.200H6.400a1.400 1.400 0 0 0-1.400 1.400v2.800a1.400 1.400 0 0 0 1.400 1.400h4.400M18.200 7.200h-4.400a1.400 1.400 0 0 0-1.400 1.400v2.800a1.400 1.400 0 0 0 1.400 1.400h4.400"/></svg>
  </div>
  <!-- hand -->
  <div class="btn" style="left:1117px;width:66px;top:19.500px">
    <svg class="abs" style="left:20px;top:14px" width="26" height="28" viewBox="0 0 26 28"><path fill="none" stroke="#fff" stroke-width="2.400" stroke-linejoin="round" stroke-linecap="round" d="M7.600 4.800V16.200L2.600 13.600C1.600 13.100.6 14.200 1.200 15.400 3.500 20.500 7 26.700 13.300 26.700c5.700 0 9.400-3.900 9.400-9.200V6M12.400 1.800v11.700M17 2.800v10.700"/></svg>
  </div>
  <!-- more -->
  <div class="btn" style="left:1192px;width:42px;top:19.500px">
    <svg class="abs" style="left:9px;top:16px" width="24" height="24" viewBox="0 0 24 24"><circle cx="12" cy="5" r="2.700" fill="#fff"/><circle cx="12" cy="12" r="2.700" fill="#fff"/><circle cx="12" cy="19" r="2.700" fill="#fff"/></svg>
  </div>
  <!-- hangup -->
  <div class="btn" style="left:1244px;width:84px;top:19.500px;background:#e0352e">
    <svg class="abs" style="left:28px;top:14px" width="28" height="28" viewBox="0 0 24 24"><path fill="#fff" d="M12 9c-1.600 0-3.150.25-4.600.72v3.100c0 .39-.23.740-.56.900-.98.490-1.870 1.120-2.660 1.850-.18.180-.43.280-.7.280-.28 0-.53-.11-.71-.29L.29 13.080c-.18-.17-.29-.42-.29-.7 0-.28.110-.53.290-.71C3.340 8.780 7.460 7 12 7s8.660 1.780 11.710 4.670c.18.180.29.430.29.710 0 .28-.11.530-.29.710l-2.480 2.480c-.18.180-.43.290-.71.290-.27 0-.52-.11-.7-.28-.79-.74-1.690-1.360-2.670-1.850-.33-.16-.56-.5-.56-.9v-3.100C15.150 9.250 13.600 9 12 9z"/></svg>
  </div>
  <!-- right icons -->
  <svg class="abs" style="left:1639.300px;top:33px" width="29" height="29" viewBox="0 0 24 24"><path fill="#fff" d="M11 7h2v2h-2zm0 4h2v6h-2zm1-9C6.480 2 2 6.480 2 12s4.480 10 10 10 10-4.480 10-10S17.520 2 12 2zm0 18c-4.410 0-8-3.590-8-8s3.590-8 8-8 8 3.590 8 8-3.590 8-8 8z"/></svg>
  <svg class="abs" style="left:1694.200px;top:31.700px" width="32" height="32" viewBox="0 0 24 24"><path fill="#fff" d="M9 13.750c-2.340 0-7 1.170-7 3.500V19h14v-1.750c0-2.330-4.660-3.500-7-3.500zM4.340 17c.84-.58 2.870-1.250 4.660-1.250s3.820.67 4.660 1.250H4.340zM9 12c1.930 0 3.500-1.570 3.500-3.500S10.930 5 9 5 5.500 6.570 5.500 8.500 7.070 12 9 12zm0-5c.83 0 1.500.67 1.500 1.500S9.830 10 9 10s-1.500-.67-1.500-1.500S8.170 7 9 7zm7.040 6.810c1.160.84 1.960 1.960 1.960 3.440V19h4v-1.750c0-2.020-3.500-3.170-5.960-3.440zM15 12c1.930 0 3.500-1.570 3.500-3.500S16.930 5 15 5c-.54 0-1.040.13-1.500.35.630.89 1 1.980 1 3.150s-.37 2.260-1 3.150c.46.220.96.350 1.500.350z"/></svg>
  <div class="abs" style="left:1712px;top:9.500px;width:32px;height:23px;border-radius:12px;background:#5f6368;text-align:center;line-height:23px;font-size:13.500px;font-weight:700;color:#fff">62</div>
  <svg class="abs" style="left:1752.400px;top:33px" width="29" height="29" viewBox="0 0 24 24"><path fill="#fff" d="M4 4h16v12H5.170L4 17.170V4m0-2c-1.100 0-1.990.9-1.990 2L2 22l4-4h14c1.100 0 2-.9 2-2V4c0-1.100-.9-2-2-2H4zm2 10h8v2H6v-2zm0-3h12v2H6V9zm0-3h12v2H6V6z"/></svg>
  <svg class="abs" style="left:1813px;top:37.500px" width="20" height="20" viewBox="0 0 22 22"><g fill="#fff"><circle cx="3" cy="3" r="2.700"/><circle cx="11" cy="3" r="2.700"/><circle cx="19" cy="3" r="2.700"/><circle cx="3" cy="11" r="2.700"/><circle cx="11" cy="11" r="2.700"/><circle cx="19" cy="11" r="2.700"/><circle cx="3" cy="19" r="2.700"/><circle cx="11" cy="19" r="2.700"/><circle cx="19" cy="19" r="2.700"/></g></svg>
  <svg class="abs" style="left:1867px;top:33px" width="26" height="28" viewBox="0 0 26 28"><path fill="none" stroke="#fff" stroke-width="2.300" d="M7 10.500V7.200c0-5.400 8.200-5.400 8.200 0v3.300"/><path fill="none" stroke="#fff" stroke-width="2.400" stroke-linejoin="round" d="M19.300 13.500v-3H3v14.300h10"/><circle cx="19.500" cy="20.500" r="6.200" fill="#fff"/><circle cx="19.500" cy="18.600" r="1.700" fill="#6472a6"/><path fill="#6472a6" d="M15.800 23.300c1-1.700 6.400-1.700 7.400 0-1.600 2.400-5.800 2.400-7.400 0z"/></svg>
  <div class="abs" style="left:0;top:94.500px;width:1920px;height:1px;background:#55565a"></div>
</div>

</body>
</html>
